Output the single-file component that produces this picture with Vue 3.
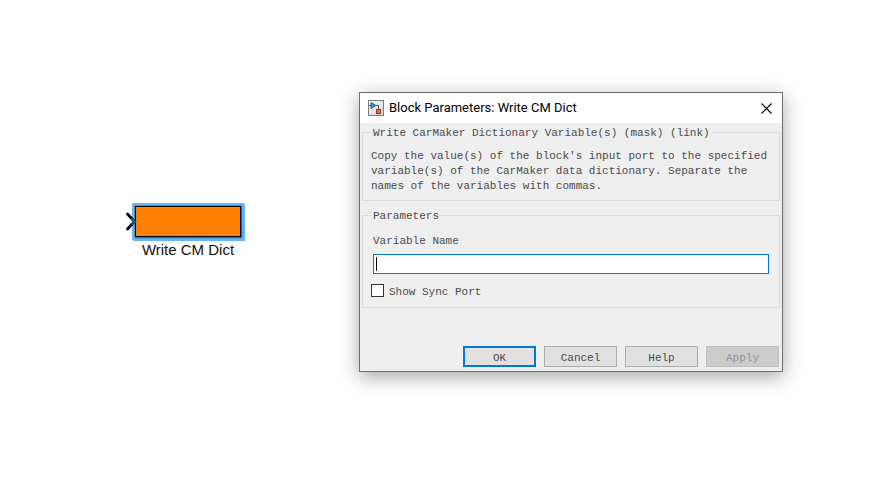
<script setup>
import { ref } from 'vue'

const variableName = ref('')
const showSyncPort = ref(false)
const description =
  "Copy the value(s) of the block's input port to the specified variable(s) of the CarMaker data dictionary. Separate the names of the variables with commas."
const buttons = [
  { label: 'OK', kind: 'primary' },
  { label: 'Cancel', kind: '' },
  { label: 'Help', kind: '' },
  { label: 'Apply', kind: '', disabled: true },
]
</script>

<template>
  <main class="canvas">
    <figure class="block">
      <div class="block-body">
        <svg class="port" width="12" height="22" viewBox="0 0 12 22" aria-hidden="true">
          <path d="M2.5 3 L9.5 10.5 L2.5 18" fill="none" stroke="#000" stroke-width="2.8" stroke-linecap="round" />
          <path d="M6.5 7.3 L9.5 10.5 L6.5 13.7" fill="none" stroke="#155a8c" stroke-width="2.8" />
        </svg>
        <div class="block-face"></div>
      </div>
      <figcaption>Write CM Dict</figcaption>
    </figure>

    <section class="dialog" role="dialog" aria-labelledby="dialog-title">
      <header class="titlebar">
        <svg width="16" height="16" viewBox="0 0 16 16" aria-hidden="true">
          <defs>
            <linearGradient id="tile" x1="0" y1="0" x2="1" y2="1">
              <stop offset="0" stop-color="#ffffff" />
              <stop offset="1" stop-color="#d0d2d4" />
            </linearGradient>
          </defs>
          <rect x="0.5" y="0.5" width="15" height="15" fill="url(#tile)" stroke="#7a7d80" />
          <path d="M1 5.5H3M7 5.5H10.5V9" fill="none" stroke="#4c555e" />
          <path d="M3 2.5L7.8 5.5L3 8.5Z" fill="#2d9ad6" stroke="#175f8e" />
          <rect x="8.5" y="9.5" width="4" height="4" fill="#f06a2c" stroke="#a83410" />
        </svg>
        <h1 id="dialog-title">Block Parameters: Write CM Dict</h1>
        <button class="close" type="button" aria-label="Close">
          <svg width="11" height="11" viewBox="0 0 11 11" aria-hidden="true">
            <path d="M0.5 0.5L10.5 10.5M10.5 0.5L0.5 10.5" stroke="#000" stroke-width="1.1" />
          </svg>
        </button>
      </header>

      <form class="content" @submit.prevent>
        <fieldset>
          <legend>Write CarMaker Dictionary Variable(s) (mask) (link)</legend>
          <p class="description">{{ description }}</p>
        </fieldset>

        <fieldset class="parameters">
          <legend>Parameters</legend>
          <div class="field">
            <label for="variable-name">Variable Name</label>
            <div class="entry">
              <input id="variable-name" v-model="variableName" type="text" />
              <span v-if="!variableName" class="caret"></span>
            </div>
          </div>
          <div class="check">
            <input id="sync-port" v-model="showSyncPort" type="checkbox" />
            <label for="sync-port">Show Sync Port</label>
          </div>
        </fieldset>

        <footer class="actions">
          <button
            v-for="b in buttons"
            :key="b.label"
            type="button"
            :class="b.kind"
            :disabled="b.disabled"
          >{{ b.label }}</button>
        </footer>
      </form>
    </section>
  </main>
</template>

<style>
body {
  background: #fff;
}
</style>

<style scoped>
* {
  box-sizing: border-box;
}

.canvas {
  display: flex;
  align-items: flex-start;
  justify-content: space-between;
  min-height: 100vh;
  padding: 92px 90px 40px 132px;
}

.block {
  margin: 111px 0 0;
  width: 112px;
}

.block-body {
  position: relative;
  padding: 3px;
  background: #66b9f8;
  box-shadow: 1px 1px 0 #66b9f8;
}

.block-face {
  height: 31px;
  border: 1px solid #000;
  outline: 1px solid rgba(0, 0, 0, 0.2);
  background: #ff8000;
  box-shadow: 1px 1px 2px rgba(10, 60, 110, 0.6);
}

.port {
  position: absolute;
  left: -7px;
  top: 8px;
}

.block figcaption {
  padding-top: 1px;
  font: 15px/18px "Liberation Sans", Arial, sans-serif;
  color: #111;
  text-align: center;
  white-space: nowrap;
}

.dialog {
  flex: 0 1 424px;
  border: 1px solid #6b6d70;
  background: #efefef;
  box-shadow: 0 5px 18px rgba(0, 0, 0, 0.35);
  font: 11px/15px "Liberation Mono", monospace;
  color: #4a4a4a;
}

.titlebar {
  display: flex;
  align-items: center;
  gap: 5px;
  height: 30px;
  padding: 0 10px 0 8px;
  background: #fff;
}

.titlebar h1 {
  flex: 1;
  margin: 0;
  font: 400 13px/16px Roboto, sans-serif;
  color: #000;
}

.close {
  display: flex;
  padding: 0;
  border: 0;
  background: none;
}

.content {
  padding: 1px 2px 4px;
}

fieldset {
  min-width: 0;
  margin: 0;
  padding: 0 8px 6px;
  border: 1px solid #dcdcdc;
}

legend {
  padding: 2px 2px 0;
}

.description {
  margin: 8px 0 0;
}

.parameters {
  margin-top: 6px;
  padding-bottom: 7px;
}

.field {
  display: flex;
  flex-direction: column;
  gap: 5px;
  padding: 10px 2px 0;
}

.entry {
  position: relative;
  display: flex;
}

.entry input {
  flex: 1;
  min-width: 0;
  height: 20px;
  padding: 0 3px;
  border: 1px solid #0078d7;
  border-radius: 0;
  outline: none;
  background: #fff;
  font: inherit;
}

.caret {
  position: absolute;
  left: 3px;
  top: 3px;
  width: 1px;
  height: 14px;
  background: #000;
}

.check {
  display: flex;
  align-items: flex-start;
  gap: 5px;
  margin-top: 10px;
}

.check label {
  padding-top: 1px;
}

.check input {
  appearance: none;
  width: 13px;
  height: 13px;
  margin: 0;
  border: 1px solid #333;
  background: #fff;
}

.check input:checked {
  background: #0078d7;
}

.actions {
  display: flex;
  justify-content: flex-end;
  gap: 8px;
  padding: 38px 1px 0 0;
}

.actions button {
  width: 73px;
  height: 21px;
  padding: 3px 0 0;
  border: 1px solid #adadad;
  background: #e1e1e1;
  font: inherit;
  line-height: 15px;
  color: #4a4a4a;
}

.actions .primary {
  border: 2px solid #0078d7;
}

.actions button:disabled {
  border-color: #bfbfbf;
  background: #cccccc;
  color: #929292;
}
</style>
